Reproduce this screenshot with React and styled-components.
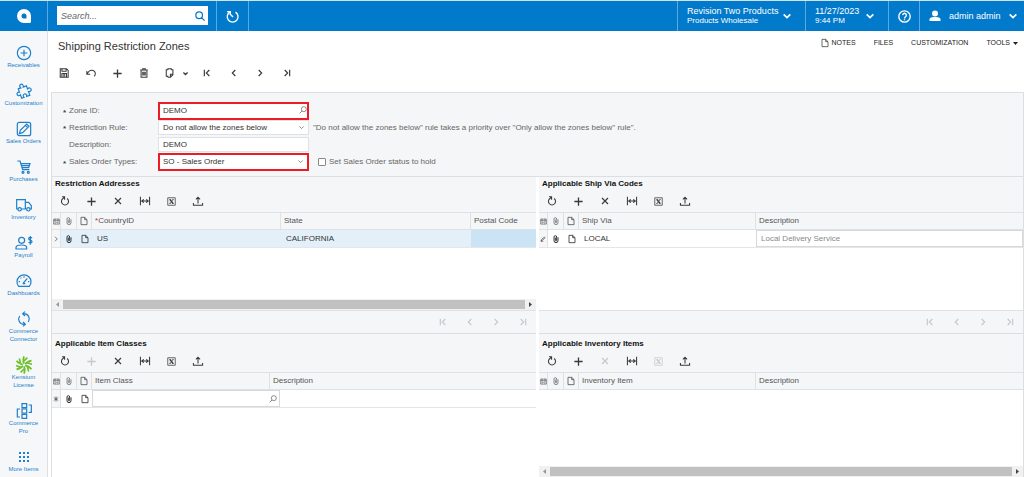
import React from "react";
import styled, { createGlobalStyle } from "styled-components";

const GlobalStyle = createGlobalStyle`
  * {
    box-sizing: border-box;
  }
  body {
    margin: 0;
    background: #fff;
    color: #3c3c3c;
    font-family: "Liberation Sans", Arial, sans-serif;
    font-size: 8px;
    line-height: 10px;
  }
  button, input, select {
    font: inherit;
    color: inherit;
    margin: 0;
    padding: 0;
    border: 0;
    background: none;
  }
  a {
    color: inherit;
    text-decoration: none;
  }
  svg {
    display: block;
    flex: none;
  }
`;

const Page = styled.div`
  min-height: 100vh;
  display: flex;
  flex-direction: column;
`;

const Header = styled.header`
  height: 31px;
  display: flex;
  border-top: 1px solid #cfe3f0;
  background: #027acc;
  color: #fff;
`;

const LogoLink = styled.a`
  width: 48px;
  display: flex;
  align-items: center;
  justify-content: center;
  border-right: 1px solid #5aa9df;
`;

const SearchBox = styled.form`
  width: 151px;
  height: 19px;
  margin: 5px 8px 5px 9px;
  padding: 0 3px 0 4px;
  display: flex;
  align-items: center;
  background: #fff;
  color: #027acc;
  input {
    flex: 1;
    min-width: 0;
    outline: 0;
    font-size: 9px;
    font-style: italic;
    color: #444;
  }
  input::placeholder {
    color: #666;
    opacity: 1;
  }
`;

const HeaderButton = styled.button`
  width: ${(props) => props.$width}px;
  padding: 0 4px 0 9px;
  display: flex;
  align-items: center;
  justify-content: ${(props) => (props.$center ? "center" : "flex-start")};
  gap: ${(props) => props.$gap || 5}px;
  border-left: 1px solid #5aa9df;
  font-size: 9px;
  text-align: left;
  white-space: nowrap;
  ${(props) => props.$center && "padding: 0;"}
  ${(props) => props.$closed && "border-right: 1px solid #5aa9df;"}
  small {
    display: block;
    font-size: 8px;
  }
`;

const Spacer = styled.div`
  flex: 1;
`;

const Body = styled.div`
  flex: 1;
  display: flex;
`;

const Sidebar = styled.nav`
  width: 48px;
  padding-top: 14px;
  display: flex;
  flex-direction: column;
  gap: 14px;
  background: #f5f7f9;
  border-right: 1px solid #dde1e5;
`;

const SideLink = styled.a`
  display: flex;
  flex-direction: column;
  align-items: center;
  color: #1f7fca;
  font-size: 6px;
  line-height: 8px;
  text-align: center;
  white-space: pre-line;
`;

const Main = styled.main`
  flex: 1;
  min-width: 0;
  padding-left: 3px;
  display: flex;
  flex-direction: column;
`;

const TitleRow = styled.div`
  height: 25px;
  padding: 7px 6px 0 7px;
  display: flex;
  justify-content: space-between;
  h1 {
    margin: 0;
    font-size: 11px;
    line-height: 17px;
    font-weight: 400;
    color: #333;
  }
`;

const PageLinks = styled.div`
  display: flex;
  gap: 18px;
  font-size: 7px;
  color: #222;
  a {
    height: 10px;
    display: flex;
    align-items: center;
    gap: 3px;
  }
`;

const PageToolbar = styled.div`
  height: 36px;
  padding: 0 6px 2px;
  display: flex;
  align-items: center;
`;

const IconGroup = styled.div`
  width: ${(props) => props.$width}px;
  display: flex;
  justify-content: space-between;
`;

const IconButton = styled.button`
  width: ${(props) => (props.$narrow ? 8 : 14)}px;
  height: 14px;
  display: flex;
  align-items: center;
  justify-content: center;
  color: ${(props) => (props.disabled ? "#c6c8ca" : "#3a3a3a")};
  ${(props) => props.$narrow && "margin: 0 11px 0 4px;"}
`;

const Content = styled.div`
  flex: 1;
  display: flex;
  flex-direction: column;
  border: 1px solid #dcdfe2;
  border-bottom: 0;
`;

const Form = styled.form`
  padding: 9px 11px 6px;
  background: #f4f6f8;
  border-bottom: 1px solid #dcdfe2;
  color: #666;
`;

const FormRow = styled.div`
  height: 17px;
  display: grid;
  grid-template-columns: 6px 89px 151px 1fr;
  align-items: center;
  white-space: nowrap;
`;

const Mark = styled.span`
  padding-top: 3px;
  font-weight: 700;
  color: #444;
`;

const Field = styled.div`
  position: relative;
  height: ${(props) => (props.$marked ? 18 : 15)}px;
  display: flex;
  background: #fff;
  border: ${(props) => (props.$marked ? "2px solid #ec1c24" : "1px solid #dfe2e5")};
  color: #333;
  input, select {
    width: 100%;
    padding-left: ${(props) => (props.$marked ? 3 : 4)}px;
    appearance: none;
    outline: 0;
  }
  svg {
    position: absolute;
    right: ${(props) => (props.$arrow ? 4 : 0)}px;
    top: 50%;
    margin-top: ${(props) => (props.$arrow ? -3 : -5)}px;
    color: #777;
    pointer-events: none;
  }
`;

const Hint = styled.span`
  padding-left: 4px;
`;

const CheckLabel = styled.label`
  padding-left: 9px;
  display: flex;
  align-items: center;
  gap: 3px;
  input {
    appearance: none;
    width: 8px;
    height: 8px;
    background: #fff;
    border: 1px solid #888;
    border-radius: 1px;
  }
  input:checked {
    background: #027acc;
  }
`;

const Panels = styled.div`
  flex: 1;
  display: grid;
  grid-template-columns: 1fr 1fr;
  grid-template-rows: 157px 1fr;
  column-gap: 3px;
`;

const Panel = styled.section`
  min-width: 0;
  padding-top: ${(props) => (props.$lower ? 3 : 0)}px;
  display: flex;
  flex-direction: column;
  background: #f4f6f8;
  border-bottom: ${(props) => (props.$lower ? "0" : "1px solid #dcdfe2")};
  h2 {
    margin: 0;
    padding-left: 3px;
    font-size: 8px;
    line-height: 14px;
    color: #111;
  }
`;

const PanelToolbar = styled.div`
  height: 21px;
  padding: 0 6px 1px;
  display: flex;
  align-items: center;
`;

const TableArea = styled.div`
  flex: 1;
  background: #fff;
`;

const Table = styled.table`
  width: 100%;
  table-layout: fixed;
  border-collapse: separate;
  border-spacing: 0;
  text-align: left;
  white-space: nowrap;
  th, td {
    padding: 0 0 0 3px;
    overflow: hidden;
  }
  th {
    height: 18px;
    background: #f4f6f8;
    border-top: 1px solid #dfe2e5;
    border-bottom: 1px solid #dfe2e5;
    border-right: 1px solid #dfe2e5;
    font-weight: 400;
    color: #555;
  }
  th:last-child {
    border-right: 0;
  }
  td {
    height: 18px;
    padding-left: 5px;
    border-bottom: 1px solid #e4e6e8;
    color: #333;
  }
  th svg, td svg {
    margin: 0 auto;
  }
  th.icon, td.icon {
    padding: 0;
  }
  td.state {
    background: #f4f6f8;
    border-right: 1px solid #dfe2e5;
  }
  tr.active td:not(.state) {
    background: #e3f0f9;
  }
  tr.active td.current {
    background: #cbe4f5;
  }
  td.edit {
    padding: 0;
  }
`;

const CellInput = styled.div`
  height: 17px;
  padding: 0 2px 0 4px;
  display: flex;
  align-items: center;
  background: #fff;
  border: 1px solid #d6d9db;
  color: #777;
  input {
    flex: 1;
    min-width: 0;
    outline: 0;
  }
  input::placeholder {
    color: #888;
    opacity: 1;
  }
  svg {
    margin: 0;
  }
`;

const Required = styled.span`
  color: #e02020;
`;

const ScrollTrack = styled.div`
  height: 11px;
  padding: 1px 0;
  display: flex;
  align-items: center;
  background: #f1f1f1;
`;

const ScrollThumb = styled.div`
  flex: 1;
  height: 9px;
  background: #c1c1c1;
`;

const ScrollArrow = styled.button`
  width: 11px;
  display: flex;
  justify-content: center;
  color: ${(props) => (props.$dark ? "#444" : "#999")};
`;

const PanelFooter = styled.div`
  height: 23px;
  padding-right: 6px;
  display: flex;
  align-items: center;
  justify-content: flex-end;
  border-top: 1px solid #dfe2e5;
`;

// 24x24 line drawings
const shapes = {
  search: <path d="M16 16l7 7M18 10a8 8 0 1 1-16 0 8 8 0 0 1 16 0z" />,
  lookup: <path d="M9 15l-7 7M22 9.500a7.500 7.500 0 1 1-15 0 7.500 7.500 0 0 1 15 0z" />,
  history: <path d="M7 4a10 10 0 1 0 10.500 0M2 3h6v6M7 7l6 6" />,
  down: <path d="M2 7l10 10L22 7" />,
  help: (
    <>
      <circle cx="12" cy="12" r="10.500" />
      <path d="M8.500 9.500a3.500 3.500 0 1 1 5.500 3c-1.500 1-2 1.500-2 3M12 17v2" />
    </>
  ),
  user: (
    <g fill="currentColor" stroke="none">
      <circle cx="12" cy="7" r="6" />
      <path d="M1 22v-3c0-4 6-5 11-5s11 1 11 5v3z" />
    </g>
  ),
  save: <path d="M3 2h15l4 4v16H3zM7 2v6h10V2M7 22v-9h11v9M10 16h5M10 19h5" />,
  undo: <path d="M2 7v8h8M2.500 14.500C6 8 11 4 17 6c6 2 7 9 3 14" />,
  plus: <path d="M12 1v22M1 12h22" />,
  trash: <path d="M3 5h18M9 5V2h6v3M5 5v17h14V5M9 9v9M12 9v9M15 9v9" />,
  copy: <path d="M7 4H3v16h4M7 5V2h8v3M15 4h4v4M8 20H3M19 8v8l-6 6H8l-3-2M19 15h-6v7" />,
  first: <path d="M4 2v20M19 3l-9 9 9 9" />,
  prev: <path d="M16 3l-9 9 9 9" />,
  next: <path d="M8 3l9 9-9 9" />,
  last: <path d="M20 2v20M5 3l9 9-9 9" />,
  refresh: <path d="M7 6a8.500 8.500 0 1 0 10 0M5 2h6v7M11 3L7 6" />,
  close: <path d="M3 3l18 18M21 3L3 21" />,
  fit: <path d="M1 2v20M23 2v20M4 12h16M9 8l-5 4 5 4M15 8l5 4-5 4" />,
  excel: (
    <>
      <path strokeWidth="2" d="M2 2h20v20H2z" />
      <path strokeWidth="4" d="M8 7l8 10" />
      <path strokeWidth="2" d="M16 7L8 17M6 7h5M13 17h5M14 7h4M6 17h4" />
    </>
  ),
  upload: <path d="M12 18V3M7 8l5-5 5 5M1 17v5h22v-5" />,
  file: <path d="M3 1h11l7 7v15H3zM14 1v7h7" />,
  clip: <path d="M18 7v10a6 6 0 0 1-12 0V6a4 4 0 0 1 8 0v10a2 2 0 0 1-4 0V8" />,
  columns: <path d="M2 4h20v17H2zM2 9h20M7 4v17M17 4v17M9 15h6M7 2v3M17 2v3" />,
  pencil: <path d="M4 20l3-7 11-9 2 3-10 10zM3 21h10" />,
  star: <path d="M12 1v22M3 6l18 12M21 6L3 18" />,
  receivables: (
    <>
      <circle cx="12" cy="12" r="10" />
      <path d="M12 7v10M7 12h10" />
    </>
  ),
  puzzle: (
    <path
      transform="rotate(-20 12 12)"
      d="M5 6h4c-1.500-3 0-5 2-5s3.500 2 2 5h5v5c3-1.500 5 0 5 2s-2 3.500-5 2v6h-5c1.500-3 0-4.500-2-4.500S7.500 18 9 21H5v-5.500c-2.500 1.500-4.500 0-4.500-2s2-3.500 4.500-2z"
    />
  ),
  orders: (
    <>
      <rect x="2" y="2" width="20" height="20" rx="3" />
      <path d="M5 19l1.500-5L16 4.500l3.500 3.500-9.500 9.500zM14 6.500l3.500 3.500" />
    </>
  ),
  cart: (
    <>
      <path d="M2 3h4l4 13h10M7 7h14l-2 6H9M8 10h12" />
      <circle cx="10.500" cy="20" r="1.500" />
      <circle cx="18.500" cy="20" r="1.500" />
    </>
  ),
  truck: (
    <>
      <path d="M3 18H1V4h13v14H8M14 8h5l4 5v5h-2M16 18h-2" />
      <circle cx="5.500" cy="18.500" r="2.500" />
      <circle cx="18.500" cy="18.500" r="2.500" />
    </>
  ),
  payroll: (
    <>
      <circle cx="8.500" cy="8" r="4.500" />
      <path d="M0 21v-2c0-3 4-4 8-4s8 1 8 4v2zM24 5c-1-2-5-2-5 .5s5 2 5 4.500-4 2.500-5 .5M21.500 1.500v13" />
    </>
  ),
  gauge: <path d="M4 20a10.500 10.500 0 1 1 16 0zM11 15l6-7M4 13h2M7 7l1 1M12 5v2M18 13h2M10 16h4" />,
  sync: <path d="M10 4h2a8 8 0 0 1 6.500 12.500M13.500 1L10 4l3.500 3.500M14 20h-2A8 8 0 0 1 5.500 7.500M10.500 23l3.500-3-3.500-3.500" />,
  kensium: (
    <g stroke="#6cc02c" strokeWidth="2.500">
      {[0, 60, 120, 180, 240, 300].map((angle) => (
        <path key={angle} transform={`rotate(${angle} 12 12)`} d="M12 10C10.500 7 10.500 3 12-1M12 6l5-5" />
      ))}
    </g>
  ),
  commerce: <path d="M9 1h7v6H9zM9 9h7v6H9zM9 17h7v6H9zM6 9H2v12h4M19 3h4v11h-4" />,
};

const Icon = ({ name, size = 10, weight = 2.5 }) => (
  <svg
    width={size}
    height={size}
    viewBox="0 0 24 24"
    fill="none"
    stroke="currentColor"
    strokeWidth={weight}
    overflow="visible"
    aria-hidden="true"
  >
    {shapes[name]}
  </svg>
);

const Triangle = ({ d }) => (
  <svg width="5" height="5" viewBox="0 0 10 10" aria-hidden="true">
    <path fill="currentColor" d={d} />
  </svg>
);

const Dots = () => (
  <svg width="16" height="16" viewBox="0 0 16 16" fill="currentColor" aria-hidden="true">
    {[3, 7, 11].map((y) => [3, 7, 11].map((x) => <rect key={`${x}-${y}`} x={x} y={y} width="2" height="2" />))}
  </svg>
);

const sideItems = [
  ["Receivables", "receivables"],
  ["Customization", "puzzle"],
  ["Sales Orders", "orders"],
  ["Purchases", "cart"],
  ["Inventory", "truck"],
  ["Payroll", "payroll"],
  ["Dashboards", "gauge"],
  ["Commerce\nConnector", "sync"],
  ["Kensium\nLicense", "kensium"],
  ["Commerce\nPro", "commerce"],
  ["More Items", "dots"],
];

const panelTools = ["refresh", "plus", "close", "fit", "excel", "upload"];
const pagers = ["first", "prev", "next", "last"];

const iconSizes = { close: 8, first: 8, prev: 8, next: 8, last: 8, plus: 9, excel: 9 };

const Tools = ({ names, width, disabled = [], off }) => (
  <IconGroup $width={width}>
    {names.map((name) => (
      <IconButton key={name} type="button" aria-label={name} disabled={off || disabled.includes(name)}>
        <Icon name={name} size={iconSizes[name] || 10} weight={iconSizes[name] ? 3.5 : 2.5} />
      </IconButton>
    ))}
  </IconGroup>
);

const Scrollbar = () => (
  <ScrollTrack>
    <ScrollArrow type="button" aria-label="Scroll left">
      <Triangle d="M8 0v10L2 5z" />
    </ScrollArrow>
    <ScrollThumb />
    <ScrollArrow type="button" aria-label="Scroll right" $dark>
      <Triangle d="M2 0v10l6-5z" />
    </ScrollArrow>
  </ScrollTrack>
);

const GridPanel = ({ title, disabled, columns, head, children, scroll, paged, lower }) => (
  <Panel $lower={lower}>
    <h2>{title}</h2>
    <PanelToolbar>
      <Tools names={panelTools} width={147} disabled={disabled} />
    </PanelToolbar>
    <TableArea>
      <Table>
        <colgroup>
          {[9, 16, 15, ...columns].map((width, i) => (
            <col key={i} width={width} />
          ))}
          <col />
        </colgroup>
        <thead>
          <tr>
            <th className="icon">
              <Icon name="columns" size={7} weight={2} />
            </th>
            <th className="icon">
              <Icon name="clip" size={8} weight={2} />
            </th>
            <th className="icon">
              <Icon name="file" size={8} />
            </th>
            {head}
          </tr>
        </thead>
        {children && <tbody>{children}</tbody>}
      </Table>
    </TableArea>
    {scroll && <Scrollbar />}
    {paged && (
      <PanelFooter>
        <Tools names={pagers} width={94} off />
      </PanelFooter>
    )}
  </Panel>
);

const RowIcons = ({ mark }) => (
  <>
    <td className="icon state">
      <Icon name={mark} size={6} />
    </td>
    <td className="icon">
      <Icon name="clip" size={8} weight={3} />
    </td>
    <td className="icon">
      <Icon name="file" size={8} />
    </td>
  </>
);

const App = () => {
  return (
    <Page>
      <GlobalStyle />
      <Header>
        <LogoLink href="#" aria-label="Home">
          <svg width="14" height="14" viewBox="0 0 14 14">
            <path
              fill="#fff"
              fillRule="evenodd"
              d="M7 0a7 7 0 0 1 7 7v5.500q0 1.500-1.500 1.500H7A7 7 0 0 1 7 0zM7 4.500A2.500 2.500 0 0 0 4.500 7 2.500 2.500 0 0 0 7 9.500h2.500V7A2.500 2.500 0 0 0 7 4.500z"
            />
          </svg>
        </LogoLink>
        <SearchBox>
          <input type="text" placeholder="Search..." aria-label="Search" />
          <Icon name="search" size={10} weight={3} />
        </SearchBox>
        <HeaderButton $width={33} $center $closed aria-label="Recent">
          <Icon name="history" size={13} />
        </HeaderButton>
        <Spacer />
        <HeaderButton $width={128}>
          <span>
            Revision Two Products<small>Products Wholesale</small>
          </span>
          <Icon name="down" size={8} weight={5} />
        </HeaderButton>
        <HeaderButton $width={83} $gap={7}>
          <span>
            11/27/2023<small>9:44 PM</small>
          </span>
          <Icon name="down" size={8} weight={5} />
        </HeaderButton>
        <HeaderButton $width={31} $center aria-label="Help">
          <Icon name="help" size={13} />
        </HeaderButton>
        <HeaderButton $width={105} $gap={8}>
          <Icon name="user" size={12} />
          admin admin
          <Icon name="down" size={8} weight={5} />
        </HeaderButton>
      </Header>
      <Body>
        <Sidebar>
          {sideItems.map(([label, icon]) => (
            <SideLink href="#" key={label}>
              {icon === "dots" ? <Dots /> : <Icon name={icon} size={16} weight={1.8} />}
              {label}
            </SideLink>
          ))}
        </Sidebar>
        <Main>
          <TitleRow>
            <h1>Shipping Restriction Zones</h1>
            <PageLinks>
              <a href="#">
                <Icon name="file" size={8} weight={2} />
                NOTES
              </a>
              <a href="#">FILES</a>
              <a href="#">CUSTOMIZATION</a>
              <a href="#">
                TOOLS
                <Triangle d="M0 2h10L5 8z" />
              </a>
            </PageLinks>
          </TitleRow>
          <PageToolbar>
            <Tools names={["save", "undo", "plus", "trash", "copy"]} width={120} />
            <IconButton type="button" $narrow aria-label="Clipboard menu">
              <Icon name="down" size={5} weight={6} />
            </IconButton>
            <Tools names={pagers} width={94} />
          </PageToolbar>
          <Content>
            <Form>
              <FormRow>
                <Mark>*</Mark>
                <label htmlFor="zone">Zone ID:</label>
                <Field $marked>
                  <input id="zone" type="text" defaultValue="DEMO" />
                  <Icon name="lookup" size={8} />
                </Field>
              </FormRow>
              <FormRow>
                <Mark>*</Mark>
                <label htmlFor="rule">Restriction Rule:</label>
                <Field $arrow>
                  <select id="rule">
                    <option>Do not allow the zones below</option>
                    <option>Only allow the zones below</option>
                  </select>
                  <Icon name="down" size={5} weight={4} />
                </Field>
                <Hint>"Do not allow the zones below" rule takes a priority over "Only allow the zones below" rule".</Hint>
              </FormRow>
              <FormRow>
                <span />
                <label htmlFor="description">Description:</label>
                <Field>
                  <input id="description" type="text" defaultValue="DEMO" />
                </Field>
              </FormRow>
              <FormRow>
                <Mark>*</Mark>
                <label htmlFor="types">Sales Order Types:</label>
                <Field $marked $arrow>
                  <select id="types">
                    <option>SO - Sales Order</option>
                  </select>
                  <Icon name="down" size={5} weight={4} />
                </Field>
                <CheckLabel>
                  <input type="checkbox" />
                  Set Sales Order status to hold
                </CheckLabel>
              </FormRow>
            </Form>
            <Panels>
              <GridPanel
                title="Restriction Addresses"
                columns={[189, 190]}
                scroll
                paged
                head={
                  <>
                    <th>
                      <Required>*</Required>CountryID
                    </th>
                    <th>State</th>
                    <th>Postal Code</th>
                  </>
                }
              >
                <tr className="active">
                  <RowIcons mark="next" />
                  <td>US</td>
                  <td>CALIFORNIA</td>
                  <td className="current" />
                </tr>
              </GridPanel>
              <GridPanel
                title="Applicable Ship Via Codes"
                columns={[177]}
                paged
                head={
                  <>
                    <th>Ship Via</th>
                    <th>Description</th>
                  </>
                }
              >
                <tr>
                  <RowIcons mark="pencil" />
                  <td>LOCAL</td>
                  <td className="edit">
                    <CellInput>
                      <input type="text" placeholder="Local Delivery Service" aria-label="Description" />
                    </CellInput>
                  </td>
                </tr>
              </GridPanel>
              <GridPanel
                title="Applicable Item Classes"
                columns={[178, 10]}
                disabled={["plus"]}
                lower
                head={
                  <>
                    <th>Item Class</th>
                    <th colSpan="2">Description</th>
                  </>
                }
              >
                <tr>
                  <RowIcons mark="star" />
                  <td className="edit" colSpan="2">
                    <CellInput>
                      <input type="text" aria-label="Item Class" />
                      <Icon name="lookup" size={8} />
                    </CellInput>
                  </td>
                  <td />
                </tr>
              </GridPanel>
              <GridPanel
                title="Applicable Inventory Items"
                columns={[177]}
                disabled={["close", "excel"]}
                scroll
                lower
                head={
                  <>
                    <th>Inventory Item</th>
                    <th>Description</th>
                  </>
                }
              />
            </Panels>
          </Content>
        </Main>
      </Body>
    </Page>
  );
};

export default App;
